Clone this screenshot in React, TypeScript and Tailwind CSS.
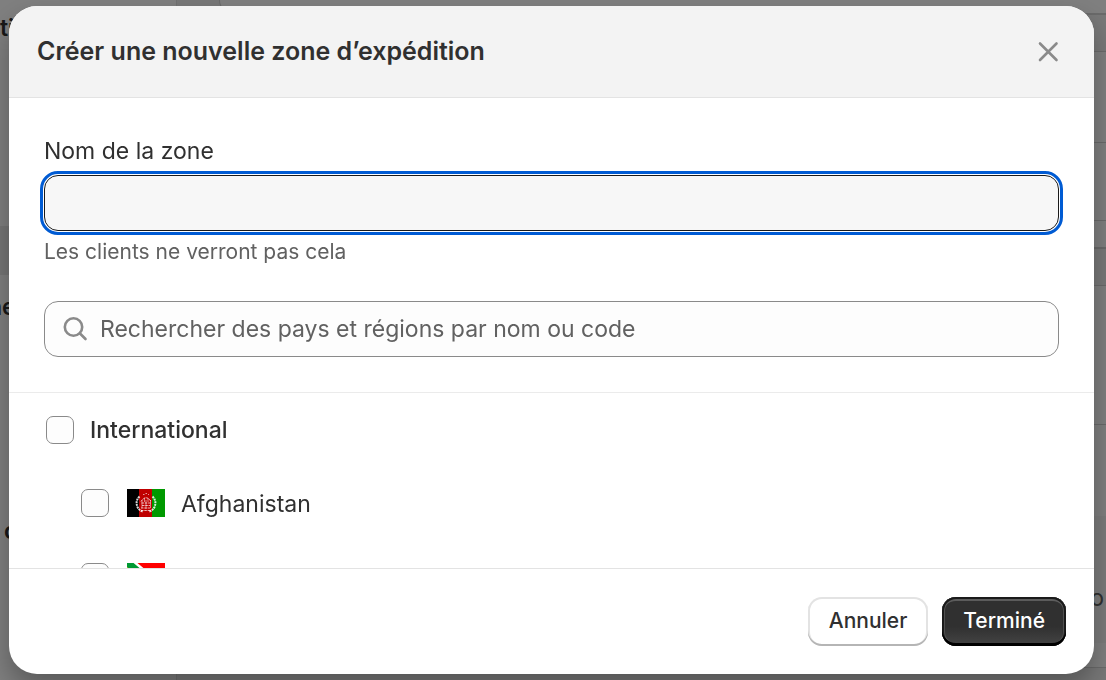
import React from 'react';
import clsx from 'clsx';

const AfghanistanFlag = () => (
  <svg viewBox="0 0 38 28" className="h-7 w-[38px] shrink-0" aria-hidden="true">
    <rect width="38" height="28" fill="#000" />
    <rect x="12" width="14" height="28" fill="#bf0000" />
    <rect x="25" width="13" height="28" fill="#009900" />
    <g fill="none" stroke="#fff" strokeWidth="1">
      <path d="M12.5 7.5Q8 12 10.500 18Q12.500 22 16 22.500" strokeDasharray="2 .7" strokeWidth="2" opacity=".85" />
      <path d="M25.500 7.500Q30 12 27.500 18Q25.500 22 22 22.500" strokeDasharray="2 .7" strokeWidth="2" opacity=".85" />
      <path d="M16 5.500h1.500M18.500 4.500h1.500M21 5.500h1" opacity=".6" />
      <path d="M14 12.500Q19 5 24 12.500M14.500 14h9M15 16.500h8M14 19h10M14 21.500h10" strokeDasharray="2.500 .8" opacity=".7" />
      <path d="M15 11v8M17.500 9v4M19 11v9M21 9v4M23.500 11v8" opacity=".5" />
    </g>
  </svg>
);

const SouthAfricaFlag = () => (
  <svg viewBox="0 0 38 28" className="h-7 w-[38px] shrink-0" aria-hidden="true">
    <rect width="38" height="14" fill="#f00" />
    <rect y="14" width="38" height="14" fill="#00148e" />
    <path d="M-2 -2L17 14L-2 30M17 14H38" fill="none" stroke="#fff" strokeWidth="13" />
    <path d="M-2 -2L17 14L-2 30M17 14H38" fill="none" stroke="#093" strokeWidth="8" />
    <path d="M0 5L11 14L0 23Z" fill="#000" stroke="#ffb81c" strokeWidth="1.500" />
  </svg>
);

const countries = [
  { code: 'AF', name: 'Afghanistan', flag: <AfghanistanFlag /> },
  { code: 'ZA', name: 'Afrique du Sud', flag: <SouthAfricaFlag /> },
];

interface CheckboxRowProps {
  id: string;
  label: string;
  icon?: React.ReactNode;
  nested?: boolean;
}

const CheckboxRow = ({ id, label, icon, nested }: CheckboxRowProps) => (
  <li className={clsx('flex items-center', nested ? 'h-[74px] pl-[72px]' : 'h-[72px] pl-[37px]')}>
    <input
      id={id}
      type="checkbox"
      className="size-7 shrink-0 appearance-none rounded-[7px] border border-[#8a8a8a] bg-[#fdfdfd] checked:bg-[#303030]"
    />
    <label
      htmlFor={id}
      className={clsx('flex items-center gap-4', nested ? 'pl-[18px]' : 'pl-4 font-medium')}
    >
      {icon}
      <span className={clsx(nested && 'pt-0.5')}>{label}</span>
    </label>
  </li>
);

// Settings page that stays visible around the edges of the modal
const PageBehind = () => (
  <div className="flex h-full overflow-hidden bg-[#f1f1f1] text-[23px] leading-7 font-semibold">
    <div className="w-[177px] shrink-0 overflow-hidden border-r border-[#e3e3e3] bg-white">
      <div className="flex h-[226px] pt-3.5">
        <span>ti</span>
      </div>
      <div className="h-[49px] bg-[#ebebeb]" />
      <div className="flex h-[242px] pt-[18px]">
        <span className="-ml-3">ne</span>
      </div>
      <span className="pl-1">c</span>
    </div>
    <div className="flex min-w-0 flex-1 flex-col pl-[42px]">
      <div className="h-[15px] shrink-0 rounded-bl-2xl border-b-2 border-l border-[#d4d4d4] bg-white" />
      <div className="h-9 shrink-0" />
      <div className="h-[198px] shrink-0 border-y border-b-2 border-[#d4d4d4] bg-white">
        <div className="h-[91px] border-b border-[#d4d4d4]" />
        <div className="h-[78px] border-b border-[#d4d4d4]" />
      </div>
      <div className="h-9 shrink-0" />
      <div className="flex-1 border-y border-[#d4d4d4] bg-white">
        <div className="h-[139px] border-b border-[#d4d4d4]" />
        <div className="h-[91px]" />
        <div className="flex h-[127px] justify-end bg-[#f7f7f7] pt-[68px] pr-0.5 font-normal text-[#616161]">
          <span>To</span>
        </div>
      </div>
      <div className="h-3 shrink-0" />
    </div>
  </div>
);

export default function App() {
  return (
    <div className="h-screen font-['Inter',sans-serif] text-[#303030]">
      <PageBehind />
      <div className="fixed inset-0 flex bg-black/50 py-1.5 pr-3 pl-[9px]">
        <div
          role="dialog"
          aria-modal="true"
          aria-labelledby="modal-title"
          className="flex min-w-0 flex-1 flex-col overflow-hidden rounded-[28px] bg-white shadow-[0_14px_28px_rgba(0,0,0,0.3)]"
        >
          <header className="flex h-[92px] shrink-0 items-center justify-between border-b border-[#e3e3e3] bg-[#f3f3f3] pr-8 pl-7">
            <h2 id="modal-title" className="text-[25px] font-semibold">
              Créer une nouvelle zone d’expédition
            </h2>
            <button type="button" aria-label="Fermer" className="text-[#8a8a8a]">
              <svg viewBox="0 0 28 28" className="size-7" fill="none" stroke="currentColor" strokeWidth="2.600" strokeLinecap="round">
                <path d="M6 5.500L22.500 22M22.500 5.500L6 22" />
              </svg>
            </button>
          </header>

          <div className="min-h-0 flex-1 overflow-hidden text-[23px] leading-7">
            <section className="border-b border-[#ebebeb] px-[35px] pt-[39px] pb-[35px]">
              <label htmlFor="zone-name" className="block">
                Nom de la zone
              </label>
              <input
                id="zone-name"
                type="text"
                aria-describedby="zone-help"
                className="mt-2.5 block h-14 w-full rounded-[14px] border border-[#1a1a1a] bg-[#f7f7f7] px-5 outline-3 outline-offset-1 outline-[#005bd3]"
              />
              <p id="zone-help" className="mt-[7px] text-[21px] text-[#616161]">
                Les clients ne verront pas cela
              </p>
              <div className="mt-[35px] flex h-14 items-center gap-[11px] rounded-[14px] border border-[#8a8a8a] bg-[#fdfdfd] pl-4">
                <svg viewBox="0 0 28 28" className="size-7 shrink-0" fill="none" stroke="#8a8a8a" strokeWidth="2.600" strokeLinecap="round" aria-hidden="true">
                  <circle cx="12.500" cy="12" r="8.700" />
                  <path d="M19 18.500L24.500 24" />
                </svg>
                <input
                  type="text"
                  aria-label="Rechercher des pays et régions"
                  placeholder="Rechercher des pays et régions par nom ou code"
                  className="h-full min-w-0 flex-1 bg-transparent outline-none placeholder:text-[#616161]"
                />
              </div>
            </section>

            <ul className="pt-px">
              <CheckboxRow id="zone-international" label="International" />
              {countries.map((country) => (
                <CheckboxRow
                  key={country.code}
                  id={`country-${country.code}`}
                  label={country.name}
                  icon={country.flag}
                  nested
                />
              ))}
            </ul>
          </div>

          <footer className="flex h-[106px] shrink-0 items-center justify-end gap-3.5 border-t border-[#e3e3e3] px-7 text-[21px] font-medium">
            <button
              type="button"
              className="h-[49px] rounded-[14px] bg-white px-[21px] pb-0.5 shadow-[inset_0_-2px_0_#b5b5b5,inset_0_0_0_2px_#e3e3e3]"
            >
              Annuler
            </button>
            <button
              type="button"
              className="h-[49px] rounded-[14px] bg-linear-to-b from-[#303030] from-60% to-[#454545] px-[21px] pb-0.5 text-white shadow-[inset_0_-3px_0_#000,inset_0_0_0_2px_#1a1a1a,inset_0_4px_0_#5c5c5c,inset_0_0_0_3px_#505050]"
            >
              Terminé
            </button>
          </footer>
        </div>
      </div>
    </div>
  );
}
